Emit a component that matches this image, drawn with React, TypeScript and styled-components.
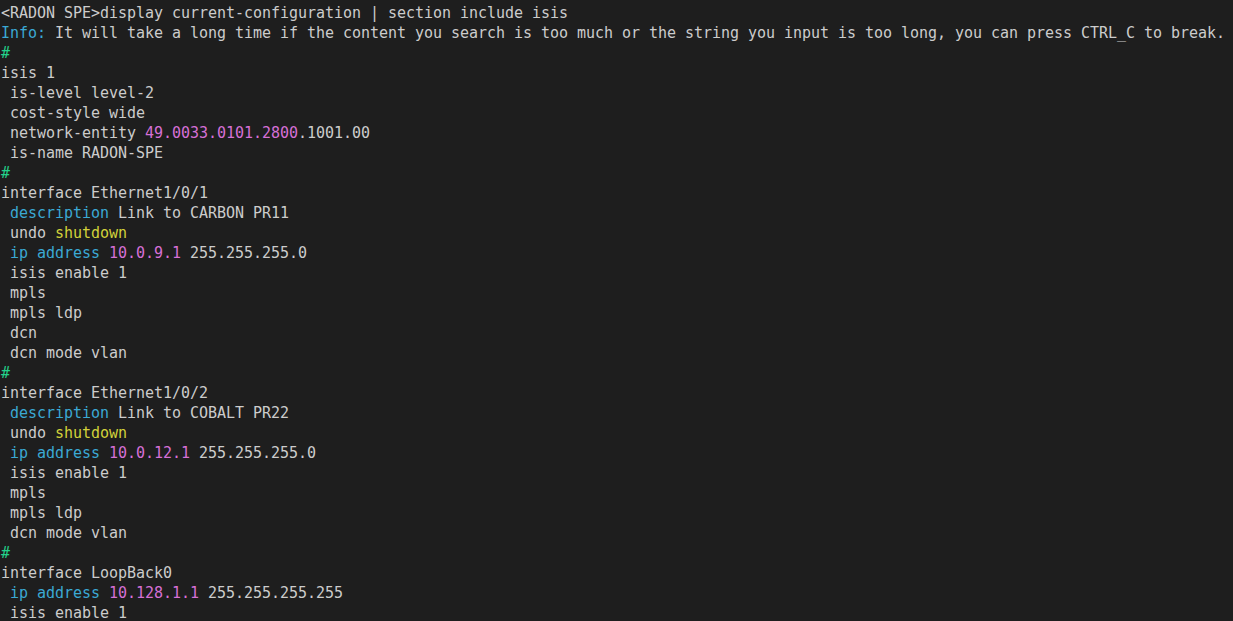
import React from "react";
import styled, { createGlobalStyle } from "styled-components";

const Global = createGlobalStyle`
  html, body { margin: 0; padding: 0; background: #1e1e1e; }
  body { overflow: hidden; }
`;

const Terminal = styled.div`
  width: 1233px;
  height: 621px;
  box-sizing: border-box;
  background: #1e1e1e;
  padding: 3px 0 0 1px;
  overflow: hidden;
  font-family: "DejaVu Sans Mono", "Liberation Mono", monospace;
  font-size: 15px;
  letter-spacing: -0.03px;
  color: #cccccc;
`;

const Line = styled.div`
  height: 20px;
  line-height: 20px;
  white-space: pre;
`;

type Tone = "cyan" | "magenta" | "yellow" | "green";
const toneColor: Record<Tone, string> = {
  cyan: "#3ba9d4",
  magenta: "#d670d6",
  yellow: "#d2d23a",
  green: "#23d18b",
};

const Span = styled.span<{ $tone: Tone }>`
  color: ${(p) => toneColor[p.$tone]};
`;

type Seg = string | [Tone, string];
const lines: Seg[][] = [
  ["<RADON SPE>display current-configuration | section include isis"],
  [["cyan", "Info:"], " It will take a long time if the content you search is too much or the string you input is too long, you can press CTRL_C to break."],
  [["green", "#"]],
  ["isis 1"],
  [" is-level level-2"],
  [" cost-style wide"],
  [" network-entity ", ["magenta", "49.0033.0101.2800"], ".1001.00"],
  [" is-name RADON-SPE"],
  [["green", "#"]],
  ["interface Ethernet1/0/1"],
  [" ", ["cyan", "description"], " Link to CARBON PR11"],
  [" undo ", ["yellow", "shutdown"]],
  [" ", ["cyan", "ip address"], " ", ["magenta", "10.0.9.1"], " 255.255.255.0"],
  [" isis enable 1"],
  [" mpls"],
  [" mpls ldp"],
  [" dcn"],
  [" dcn mode vlan"],
  [["green", "#"]],
  ["interface Ethernet1/0/2"],
  [" ", ["cyan", "description"], " Link to COBALT PR22"],
  [" undo ", ["yellow", "shutdown"]],
  [" ", ["cyan", "ip address"], " ", ["magenta", "10.0.12.1"], " 255.255.255.0"],
  [" isis enable 1"],
  [" mpls"],
  [" mpls ldp"],
  [" dcn mode vlan"],
  [["green", "#"]],
  ["interface LoopBack0"],
  [" ", ["cyan", "ip address"], " ", ["magenta", "10.128.1.1"], " 255.255.255.255"],
  [" isis enable 1"],
];

export default function App() {
  return (
    <>
      <Global />
      <Terminal>
        {lines.map((segs, i) => (
          <Line key={i}>
            {segs.map((s, j) =>
              typeof s === "string" ? (
                <React.Fragment key={j}>{s}</React.Fragment>
              ) : (
                <Span key={j} $tone={s[0]}>
                  {s[1]}
                </Span>
              )
            )}
          </Line>
        ))}
      </Terminal>
    </>
  );
}
